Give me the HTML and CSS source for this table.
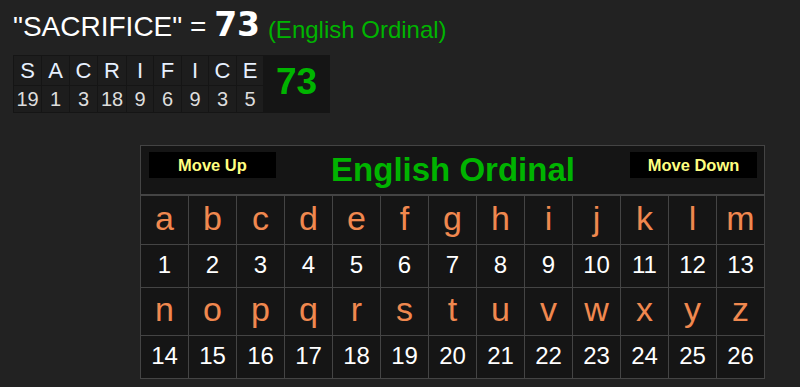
FILE: index.html
```html
<!DOCTYPE html>
<html>
<head>
<meta charset="utf-8">
<link rel="stylesheet" href="styles.css">
</head>
<body>
<div class="page">
  <h1 class="result">
    <span class="phrase">"SACRIFICE" =</span>
    <span class="total">73</span>
    <span class="cipher">(English Ordinal)</span>
  </h1>

  <div class="breakdown">
    <div class="ch">S</div>
    <div class="ch">A</div>
    <div class="ch">C</div>
    <div class="ch">R</div>
    <div class="ch">I</div>
    <div class="ch">F</div>
    <div class="ch">I</div>
    <div class="ch">C</div>
    <div class="ch">E</div>
    <div class="sum">73</div>
    <div class="val">19</div>
    <div class="val">1</div>
    <div class="val">3</div>
    <div class="val">18</div>
    <div class="val">9</div>
    <div class="val">6</div>
    <div class="val">9</div>
    <div class="val">3</div>
    <div class="val">5</div>
  </div>

  <div class="chart">
    <div class="chart-head">
      <button class="move">Move Up</button>
      <div class="chart-title">English Ordinal</div>
      <button class="move">Move Down</button>
    </div>
    <div class="grid">
      <div class="let">a</div><div class="let">b</div><div class="let">c</div><div class="let">d</div><div class="let">e</div><div class="let">f</div><div class="let">g</div><div class="let">h</div><div class="let">i</div><div class="let">j</div><div class="let">k</div><div class="let">l</div><div class="let">m</div>
      <div class="num">1</div><div class="num">2</div><div class="num">3</div><div class="num">4</div><div class="num">5</div><div class="num">6</div><div class="num">7</div><div class="num">8</div><div class="num">9</div><div class="num">10</div><div class="num">11</div><div class="num">12</div><div class="num">13</div>
      <div class="let">n</div><div class="let">o</div><div class="let">p</div><div class="let">q</div><div class="let">r</div><div class="let">s</div><div class="let">t</div><div class="let">u</div><div class="let">v</div><div class="let">w</div><div class="let">x</div><div class="let">y</div><div class="let">z</div>
      <div class="num">14</div><div class="num">15</div><div class="num">16</div><div class="num">17</div><div class="num">18</div><div class="num">19</div><div class="num">20</div><div class="num">21</div><div class="num">22</div><div class="num">23</div><div class="num">24</div><div class="num">25</div><div class="num">26</div>
    </div>
  </div>
</div>
</body>
</html>
```

FILE: styles.css
```css
html, body {
  margin: 0;
  padding: 0;
  background: #222222;
}

body {
  font-family: "Liberation Sans", Arial, sans-serif;
  color: #ffffff;
  width: 800px;
  height: 387px;
  overflow: hidden;
}

.page {
  padding: 11px 0 0 13px;
}

.result {
  margin: 0;
  height: 35px;
  font-weight: normal;
  font-size: 28px;
  line-height: 32px;
  white-space: nowrap;
}

.phrase {
  color: #ffffff;
}

.total {
  font-family: "DejaVu Sans", "Liberation Sans", sans-serif;
  font-weight: bold;
  font-size: 33px;
  line-height: 0;
  color: #ffffff;
}

.cipher {
  font-size: 24px;
  line-height: 0;
  color: #00b400;
  vertical-align: -2px;
}

.breakdown {
  margin-top: 9px;
  display: grid;
  justify-content: start;
  grid-template-columns: 27px 27px 27px 28px 26px 27px 26px 27px 26px 65px;
  grid-template-rows: 29px 26px;
  gap: 1px;
  padding: 1px;
  width: max-content;
  background: #151515;
}

.ch {
  background: #1d1d1d;
  color: #e6f0ff;
  font-size: 22px;
  display: flex;
  align-items: center;
  justify-content: center;
}

.val {
  background: #1d1d1d;
  color: #dddddd;
  font-size: 20px;
  display: flex;
  align-items: center;
  justify-content: center;
}

.sum {
  grid-column: 10;
  grid-row: 1 / span 2;
  color: #00b400;
  font-weight: bold;
  font-size: 37px;
  display: flex;
  align-items: center;
  justify-content: center;
  padding-bottom: 4px;
  background: #151515;
}

.chart {
  margin: 32px 0 0 127px;
  width: 623px;
  border: 1px solid #444444;
  background: #151515;
}

.chart-head {
  height: 48px;
  border-bottom: 2px solid #444444;
  display: flex;
  justify-content: space-between;
  align-items: flex-start;
  padding: 0 7px 0 8px;
}

.move {
  margin-top: 6px;
  width: 127px;
  height: 26px;
  border: none;
  background: #000000;
  color: #ffff80;
  font-family: "Liberation Sans", Arial, sans-serif;
  font-weight: bold;
  font-size: 16.5px;
  padding: 0;
}

.chart-title {
  margin-top: 5px;
  color: #00b400;
  font-weight: bold;
  font-size: 33px;
  line-height: 38px;
}

.grid {
  display: grid;
  grid-template-columns: repeat(13, 47px);
  grid-template-rows: 48px 42px 47px 42px;
  gap: 1px;
  background: #444444;
}

.let, .num {
  background: #151515;
  display: flex;
  align-items: center;
  justify-content: center;
}

.let {
  color: #f0884f;
  font-size: 34px;
  padding-bottom: 4px;
}

.num {
  color: #ffffff;
  font-size: 24px;
  padding-bottom: 2px;
}
```
